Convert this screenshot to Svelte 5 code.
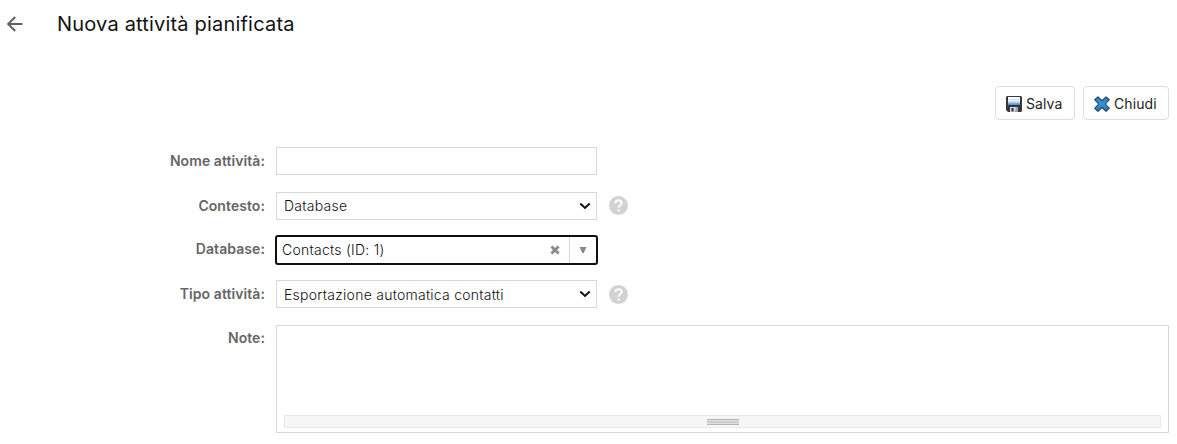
<script>
  let name = '';
  let context = 'Database';
  let database = 'Contacts (ID: 1)';
  let taskType = 'Esportazione automatica contatti';
  let notes = '';

  const contexts = ['Database'];
  const taskTypes = ['Esportazione automatica contatti'];

  function clearDatabase() {
    database = '';
  }
</script>

<div class="page">
  <header>
    <button class="back" aria-label="Indietro">
      <svg width="16" height="16" viewBox="0 0 16 16">
        <path d="M15.5 8H1.5M8.2 1L1.2 8l7 7" fill="none" stroke="#606060" stroke-width="1.9" />
      </svg>
    </button>
    <h1>Nuova attività pianificata</h1>
  </header>

  <div class="toolbar">
    <button class="btn">
      <svg width="16" height="16" viewBox="0 0 16 16">
        <defs>
          <linearGradient id="diskLabel" x1="0" y1="0" x2="0" y2="1">
            <stop offset="0" stop-color="#fff" />
            <stop offset="0.6" stop-color="#e4effa" />
            <stop offset="0.75" stop-color="#7db8ea" />
            <stop offset="1" stop-color="#3f8fd4" />
          </linearGradient>
        </defs>
        <path d="M1 0h14l1 1v14l-1 1H2l-2-2V1z" fill="#35373b" />
        <path d="M2 1h12v8H2z" fill="url(#diskLabel)" />
        <path d="M3 3.5h10M3 5.5h10" stroke="#c3d3e4" stroke-width="0.7" />
        <path d="M4 11h8v5H4z" fill="#d5d7da" />
        <path d="M5.5 12h2v3.5h-2z" fill="#292b2e" />
        <path d="M10 11h2v5h-3z" fill="#a0a3a7" />
      </svg>
      <span>Salva</span>
    </button>
    <button class="btn close">
      <svg width="16" height="16" viewBox="0 0 16 16">
        <defs>
          <linearGradient id="crossFill" x1="0" y1="0" x2="0" y2="1">
            <stop offset="0" stop-color="#2f75b5" />
            <stop offset="0.5" stop-color="#3a92d6" />
            <stop offset="1" stop-color="#2b6ca9" />
          </linearGradient>
        </defs>
        <path
          d="M4 .8L8 4.6 12 .8 15.3 3.7 11.4 8l3.9 4.3L12 15.3 8 11.5 4 15.3.7 12.3 4.6 8 .7 3.7z"
          fill="url(#crossFill)" stroke="#1c4469" stroke-width="1.1" stroke-linejoin="round" />
      </svg>
      <span>Chiudi</span>
    </button>
  </div>

  {#snippet help()}
    <svg class="help" width="19" height="19" viewBox="0 0 20 20">
      <circle cx="10" cy="10" r="10" fill="#d2d2d2" />
      <path d="M6.7 7.7c0-2 1.4-3.2 3.3-3.2s3.3 1.2 3.3 3c0 2.3-3.2 2.4-3.2 4.9" fill="none" stroke="#fff" stroke-width="2" />
      <path d="M9 14.2h2.2v2.2H9z" fill="#fff" />
    </svg>
  {/snippet}

  {#snippet chevron()}
    <svg class="chevron" width="12" height="8" viewBox="0 0 12 8">
      <path d="M1.3 1.6L6 6l4.7-4.4" fill="none" stroke="#111" stroke-width="2" />
    </svg>
  {/snippet}

  <form>
    <div class="row">
      <label for="name">Nome attività:</label>
      <input id="name" class="field" type="text" bind:value={name} />
    </div>

    <div class="row context">
      <label for="context">Contesto:</label>
      <div class="select">
        <select id="context" class="field" bind:value={context}>
          {#each contexts as item}
            <option value={item}>{item}</option>
          {/each}
        </select>
        {@render chevron()}
      </div>
      {@render help()}
    </div>

    <div class="row database">
      <label for="database">Database:</label>
      <div class="combo">
        <input id="database" type="text" bind:value={database} />
        <button type="button" class="clear" aria-label="Rimuovi" on:click={clearDatabase}>
          <svg width="10" height="10" viewBox="0 0 10 10">
            <path d="M1.4 1.4l7.2 7.2M8.6 1.4L1.4 8.6" stroke="#888" stroke-width="2.8" />
          </svg>
        </button>
        <button type="button" class="toggle" aria-label="Apri elenco">
          <svg width="8" height="6" viewBox="0 0 8 6">
            <path d="M.5 0h7L4.7 6H3.3z" fill="#888" />
          </svg>
        </button>
      </div>
    </div>

    <div class="row type">
      <label for="type">Tipo attività:</label>
      <div class="select">
        <select id="type" class="field" bind:value={taskType}>
          {#each taskTypes as item}
            <option value={item}>{item}</option>
          {/each}
        </select>
        {@render chevron()}
      </div>
      {@render help()}
    </div>

    <div class="row notes">
      <label for="notes">Note:</label>
      <div class="editor">
        <textarea id="notes" bind:value={notes}></textarea>
        <div class="resizer"><span></span></div>
      </div>
    </div>
  </form>
</div>

<style>
  :global(body) {
    margin: 0;
    background: #fff;
  }

  .page {
    box-sizing: border-box;
    height: 444px;
    padding-right: 8px;
    font-family: Inter, 'Liberation Sans', sans-serif;
    font-size: 14px;
    color: #222;
    overflow: hidden;
  }

  button,
  input,
  select,
  textarea {
    box-sizing: border-box;
    margin: 0;
    padding: 0;
    border: 0;
    outline: 0;
    background: none;
    font: inherit;
    color: inherit;
  }

  svg {
    display: block;
    flex: none;
  }

  header {
    display: flex;
    align-items: center;
    height: 48px;
    padding-left: 7px;
  }

  .back {
    width: 50px;
  }

  h1 {
    margin: 0;
    font-size: 20px;
    font-weight: 400;
    line-height: 24px;
    letter-spacing: 0.19px;
    color: #111;
  }

  .toolbar {
    display: flex;
    justify-content: flex-end;
    gap: 8px;
    margin-top: 38px;
  }

  .btn {
    display: flex;
    align-items: center;
    gap: 4px;
    width: 80px;
    height: 34px;
    padding: 0 0 0 10px;
    border: 1px solid #ddd;
    border-radius: 4px;
    letter-spacing: 0.1px;
  }

  .btn svg {
    margin-top: 2px;
  }

  .close {
    width: 86px;
  }

  form {
    padding-top: 27px;
  }

  .row {
    display: flex;
    align-items: flex-start;
  }

  label {
    width: 265px;
    margin-right: 11px;
    line-height: 28px;
    font-weight: 600;
    letter-spacing: 0.07px;
    text-align: right;
    color: #666;
  }

  .field {
    width: 321px;
    height: 28px;
    padding: 0 7px;
    border: 1px solid #d8d8d8;
    font-weight: 300;
    letter-spacing: 0.25px;
    color: #111;
  }

  .select {
    position: relative;
  }

  select {
    display: block;
    appearance: none;
  }

  .chevron {
    position: absolute;
    top: 10px;
    right: 6px;
    pointer-events: none;
  }

  .help {
    margin: 4px 0 0 12px;
  }

  .context {
    margin-top: 17px;
  }

  .context select {
    padding-bottom: 1px;
  }

  .database {
    margin-top: 15px;
  }

  .combo {
    display: flex;
    box-sizing: border-box;
    width: 323px;
    height: 30px;
    margin-left: -1px;
    border: 2px solid #101010;
    border-radius: 3px;
    font-weight: 300;
    letter-spacing: 0.25px;
    color: #111;
  }

  .combo input {
    flex: 1;
    min-width: 0;
    padding: 0 0 2px 5px;
    letter-spacing: inherit;
  }

  .clear,
  .toggle {
    display: flex;
    align-items: center;
    justify-content: center;
    width: 28px;
  }

  .toggle {
    width: 27px;
    padding-right: 1px;
    border-left: 1px solid #d8d8d8;
  }

  .type {
    margin-top: 15px;
  }

  .type .help {
    margin-top: 5px;
  }

  .notes {
    margin-top: 17px;
  }

  .notes label {
    line-height: 26px;
  }

  .editor {
    display: flex;
    flex: 1;
    flex-direction: column;
    box-sizing: border-box;
    height: 108px;
    padding: 7px 7px 4px;
    border: 1px solid #d8d8d8;
  }

  textarea {
    flex: 1;
    resize: none;
  }

  .resizer {
    display: flex;
    align-items: center;
    justify-content: center;
    box-sizing: border-box;
    height: 13px;
    border: 1px solid #e8e8e8;
    background: #f6f6f6;
  }

  .resizer span {
    box-sizing: border-box;
    width: 32px;
    height: 6px;
    border-top: 1px solid #b5b5b5;
    border-bottom: 1px solid #b5b5b5;
    background: linear-gradient(#e0e0e0 1px, #cfcfcf 1px, #cfcfcf 3px, #e0e0e0 3px);
  }
</style>
